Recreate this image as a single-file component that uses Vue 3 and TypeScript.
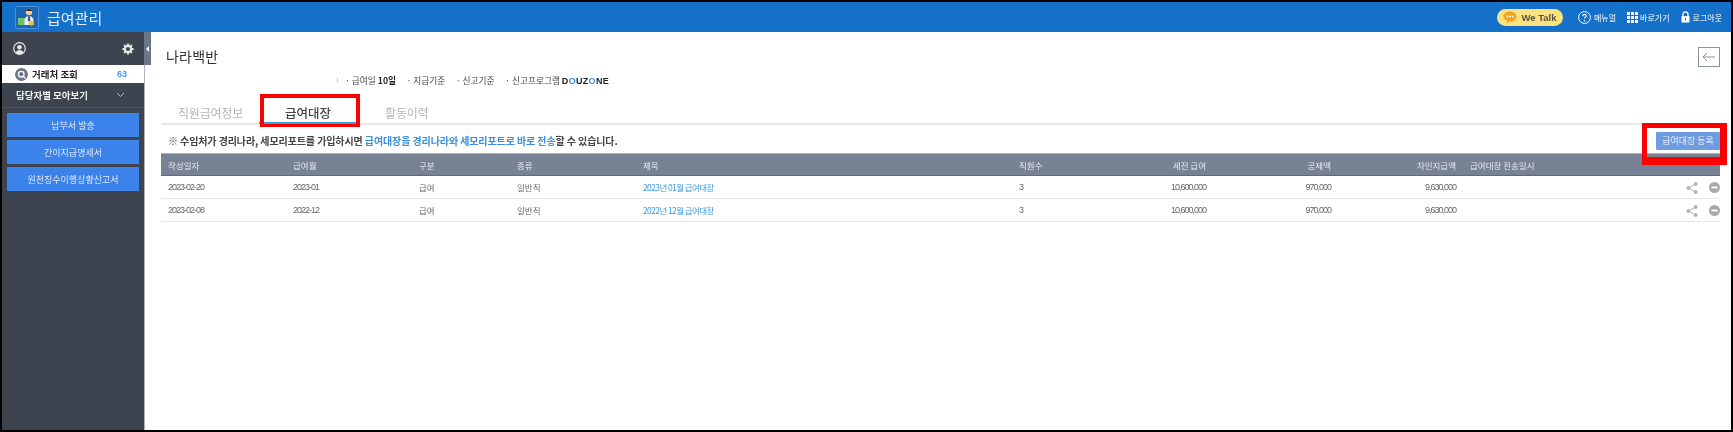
<script setup lang="ts">
interface Row {
  date: string
  month: string
  kind: string
  type: string
  title: string
  staff: string
  gross: string
  deduct: string
  net: string
}
const rows: Row[] = [
  { date: '2023-02-20', month: '2023-01', kind: '급여', type: '일반직', title: '2023년 01월 급여대장', staff: '3', gross: '10,600,000', deduct: '970,000', net: '9,630,000' },
  { date: '2023-02-08', month: '2022-12', kind: '급여', type: '일반직', title: '2022년 12월 급여대장', staff: '3', gross: '10,600,000', deduct: '970,000', net: '9,630,000' },
]
const sideButtons: string[] = ['납부서 발송', '간이지급명세서', '원천징수이행상황신고서']
const dots: number[] = [0, 1, 2, 3, 4, 5, 6, 7, 8]
</script>

<template>
  <div class="frame">
    <header class="topbar">
      <div class="logo">
        <svg width="22" height="20" viewBox="0 0 22 20">
          <rect x="2" y="11" width="12" height="7" fill="#6fc26b" />
          <circle cx="13" cy="5" r="3.2" fill="#f2d0a8" />
          <path d="M9.500 3.500q3.500-3.500 7 0l-1 .5h-5z" fill="#3a2c20" />
          <path d="M8.500 18v-5q1-4 4.500-4t4.500 4v5z" fill="#e8eef5" />
          <path d="M12.200 9h1.600l.4 5h-2.400z" fill="#33518a" />
          <circle cx="15" cy="16" r="2.500" fill="#f3c33c" />
        </svg>
      </div>
      <div class="app-title">급여관리</div>
      <div class="top-actions">
        <div class="we-talk">
          <svg width="14" height="13" viewBox="0 0 14 13">
            <path d="M7 .5c3.600 0 6.500 2.200 6.500 5S10.600 10.500 7 10.500l-.8 0L3.500 12.500l.5-2.700C1.900 9 .5 7.400.5 5.500c0-2.800 2.900-5 6.500-5z" fill="#f2a41f" />
            <circle cx="4.300" cy="5.500" r=".9" fill="#fff" />
            <circle cx="7" cy="5.500" r=".9" fill="#fff" />
            <circle cx="9.700" cy="5.500" r=".9" fill="#fff" />
          </svg>
          <span>We Talk</span>
        </div>
        <div class="top-link manual">
          <svg width="13" height="13" viewBox="0 0 13 13">
            <circle cx="6.500" cy="6.500" r="5.900" fill="none" stroke="#fff" stroke-width="1" />
            <path d="M4.700 5.100q.2-1.700 1.800-1.700t1.800 1.500q0 .9-1 1.400-.8.400-.8 1.300" fill="none" stroke="#fff" stroke-width="1.100" />
            <circle cx="6.500" cy="9.700" r=".7" fill="#fff" />
          </svg>
          <span>매뉴얼</span>
        </div>
        <div class="top-link shortcut">
          <div class="grid-icon"><i v-for="d in dots" :key="d"></i></div>
          <span>바로가기</span>
        </div>
        <div class="top-link logout">
          <svg width="9" height="12" viewBox="0 0 9 12">
            <path d="M2 5V3.300a2.500 2.500 0 0 1 5 0V5" fill="none" stroke="#fff" stroke-width="1.300" />
            <rect x=".5" y="5" width="8" height="6.500" rx=".6" fill="#fff" />
            <rect x="4" y="7" width="1" height="2.500" fill="#1470c8" />
          </svg>
          <span>로그아웃</span>
        </div>
      </div>
    </header>

    <div class="body">
      <aside class="sidebar">
        <div class="side-main">
          <div class="user-row">
            <svg width="13" height="13" viewBox="0 0 13 13">
              <circle cx="6.500" cy="6.500" r="5.800" fill="none" stroke="#e8e8e8" stroke-width="1.200" />
              <circle cx="6.500" cy="5.200" r="2.300" fill="#e8e8e8" />
              <path d="M2.500 11q1-3 4-3t4 3l-1.500 1h-5z" fill="#e8e8e8" />
            </svg>
            <svg width="12" height="12" viewBox="0 0 12 12">
              <circle cx="6" cy="6" r="3.200" fill="none" stroke="#e8e8e8" stroke-width="2.200" />
              <path d="M6 .5v2M6 9.500v2M.5 6h2M9.500 6h2M2.100 2.100l1.400 1.400M8.500 8.500l1.400 1.400M2.100 9.900l1.400-1.400M8.500 3.500l1.400-1.400" stroke="#e8e8e8" stroke-width="1.800" />
            </svg>
          </div>
          <div class="client-row">
            <svg class="search-ico" width="13" height="13" viewBox="0 0 13 13">
              <circle cx="6.500" cy="6.500" r="6.500" fill="#6b7689" />
              <circle cx="6.200" cy="6.200" r="2.800" fill="none" stroke="#fff" stroke-width="1.300" />
              <path d="M8.300 8.300l2 2" stroke="#fff" stroke-width="1.300" />
            </svg>
            <span class="client-label">거래처 조회</span>
            <span class="client-count">63</span>
          </div>
          <div class="group-row">
            <span>담당자별 모아보기</span>
            <svg width="9" height="6" viewBox="0 0 9 6">
              <path d="M1 1l3.500 3.500L8 1" fill="none" stroke="#aeb4bd" stroke-width="1" />
            </svg>
          </div>
          <div class="side-buttons">
            <div v-for="b in sideButtons" :key="b" class="side-btn">{{ b }}</div>
          </div>
        </div>
        <div class="rail">
          <div class="rail-toggle"><i></i></div>
        </div>
      </aside>

      <main class="content">
        <div class="title-row">
          <h1>나라백반</h1>
          <div class="back-btn">
            <svg width="14" height="10" viewBox="0 0 14 10">
              <path d="M13 5H1M5 1L1 5l4 4" fill="none" stroke="#8a919c" stroke-width="1" />
            </svg>
          </div>
        </div>
        <div class="info-row">
          <span class="info-tick"></span>
          <span class="info-item">· 급여일 <b>10일</b></span>
          <span class="info-item">· 지급기준</span>
          <span class="info-item">· 신고기준</span>
          <span class="info-item">· 신고프로그램 <b class="douzone">D<em>O</em>UZ<em>O</em>NE</b></span>
        </div>
        <nav class="tabs">
          <div class="tab tab-first">직원급여정보</div>
          <div class="tab tab-active">급여대장<span class="red-box tab-mark"></span></div>
          <div class="tab tab-last">활동이력</div>
        </nav>
        <div class="notice-row">
          <p class="notice">※ 수임처가 경리나라, 세모리포트를 가입하시면 <span>급여대장을 경리나라와 세모리포트로 바로 전송</span>할 수 있습니다.</p>
          <div class="register">급여대장 등록<span class="red-box reg-mark"></span></div>
        </div>
        <table class="ledger">
          <colgroup>
            <col class="c1" /><col class="c2" /><col class="c3" /><col class="c4" /><col class="c5" />
            <col class="c6" /><col class="c7" /><col class="c8" /><col class="c9" /><col class="c10" /><col class="c11" />
          </colgroup>
          <thead>
            <tr>
              <th>작성일자</th><th>급여월</th><th>구분</th><th>종류</th><th>제목</th><th>직원수</th>
              <th class="num">세전 급여</th><th class="num">공제액</th><th class="num">차인지급액</th>
              <th class="sent">급여대장 전송일시</th><th></th>
            </tr>
          </thead>
          <tbody>
            <tr v-for="r in rows" :key="r.date">
              <td class="digits">{{ r.date }}</td><td class="digits">{{ r.month }}</td><td>{{ r.kind }}</td><td>{{ r.type }}</td>
              <td class="link">{{ r.title }}</td><td class="digits">{{ r.staff }}</td>
              <td class="num digits">{{ r.gross }}</td><td class="num digits">{{ r.deduct }}</td><td class="num digits">{{ r.net }}</td>
              <td></td>
              <td class="actions">
                <svg width="12" height="12" viewBox="0 0 12 12">
                  <path d="M9.500 2L2.500 6l7 4" fill="none" stroke="#b4b4b4" stroke-width="1" />
                  <circle cx="9.700" cy="2" r="1.900" fill="#b4b4b4" />
                  <circle cx="2.300" cy="6" r="1.900" fill="#b4b4b4" />
                  <circle cx="9.700" cy="10" r="1.900" fill="#b4b4b4" />
                </svg>
                <svg width="11" height="11" viewBox="0 0 11 11">
                  <circle cx="5.500" cy="5.500" r="5.500" fill="#a9a9a9" />
                  <rect x="2.500" y="4.600" width="6" height="1.800" fill="#fff" />
                </svg>
              </td>
            </tr>
          </tbody>
        </table>
      </main>
    </div>
  </div>
</template>

<style>
html, body { margin: 0; background: #000; }
</style>

<style scoped>
.frame {
  box-sizing: border-box;
  width: 1733px;
  height: 432px;
  border: 2px solid #000;
  display: flex;
  flex-direction: column;
  overflow: hidden;
  background: #fff;
  font-family: "Noto Sans CJK KR", "Liberation Sans", sans-serif;
  filter: blur(0.55px);
}
.topbar {
  height: 30px;
  flex: none;
  background: #1470c8;
  display: flex;
  align-items: center;
  color: #fff;
  padding-left: 13px;
}
.logo {
  box-sizing: border-box;
  width: 24px;
  height: 23px;
  border: 1px solid #4a93da;
  border-radius: 2px;
  background: #1a66b5;
  display: flex;
  align-items: center;
  justify-content: center;
}
.app-title { margin-left: 8px; font-size: 15px; color: #e4eefa; }
.top-actions { margin-left: auto; display: flex; align-items: center; padding-right: 9px; }
.we-talk {
  width: 66px;
  height: 17px;
  border-radius: 9px;
  background: #fbe27e;
  display: flex;
  align-items: center;
  justify-content: center;
  gap: 4px;
  font: bold 9.500px "Liberation Sans", sans-serif;
  color: #5a5040;
}
.top-link { display: flex; align-items: center; gap: 3px; font-size: 8px; color: #fff; }
.manual { margin-left: 15px; }
.shortcut { margin-left: 11px; gap: 2px; }
.logout { margin-left: 11px; }
.grid-icon { display: grid; grid-template-columns: repeat(3, 3px); gap: 1px; }
.grid-icon i { width: 3px; height: 3px; background: #fff; }

.body { flex: 1; display: flex; min-height: 0; }
.sidebar { width: 149px; flex: none; display: flex; background: #3d4450; }
.side-main { width: 142px; flex: none; display: flex; flex-direction: column; }
.rail {
  box-sizing: border-box;
  width: 7px;
  border-left: 1px solid #aeb4bd;
  background: #fff;
}
.rail-toggle { height: 33px; margin-left: -1px; background: #6b7689; display: flex; align-items: center; justify-content: center; }
.rail-toggle i { width: 0; height: 0; border: 3px solid transparent; border-right-color: #fff; border-left-width: 0; }
.user-row {
  height: 33px;
  display: flex;
  align-items: center;
  justify-content: space-between;
  padding: 0 10px 0 11px;
}
.client-row {
  height: 18px;
  background: #fff;
  display: flex;
  align-items: center;
  padding-left: 13px;
  font-size: 9.500px;
  font-weight: 700;
  color: #222;
}
.search-ico { flex: none; }
.client-label { margin-left: 4px; width: 85px; }
.client-count { color: #4a9be8; font: bold 9px "Liberation Sans", sans-serif; }
.group-row {
  height: 25px;
  box-sizing: border-box;
  border-bottom: 1px solid #4a515d;
  display: flex;
  align-items: center;
  justify-content: space-between;
  padding: 0 19px 0 14px;
  font-size: 9.500px;
  font-weight: 700;
  color: #f0f0f0;
}
.side-buttons { display: flex; flex-direction: column; gap: 3px; padding: 5px 5px 0; }
.side-btn {
  height: 24px;
  background: #3b82ea;
  color: #dfe9f8;
  font-size: 9px;
  display: flex;
  align-items: center;
  justify-content: center;
}

.content { flex: 1; min-width: 0; padding: 0 11px 0 10px; }
.title-row {
  height: 34px;
  display: flex;
  align-items: flex-end;
  justify-content: space-between;
  padding-left: 5px;
}
h1 { margin: 0; font-size: 14px; font-weight: 400; color: #333; line-height: 20px; letter-spacing: .2px; }
.back-btn {
  box-sizing: border-box;
  width: 22px;
  height: 20px;
  margin-bottom: -1px;
  border: 1px solid #8a919c;
  display: flex;
  align-items: center;
  justify-content: center;
}
.info-row {
  height: 20px;
  margin-top: 4px;
  display: flex;
  align-items: center;
  padding-left: 176px;
  font-size: 8.700px;
  color: #444;
}
.info-tick { width: 1px; height: 5px; background: #ccc; margin-right: 7px; }
.info-item { margin-right: 10.500px; }
.info-item b { color: #222; }
.douzone { font: bold 9px "Liberation Sans", sans-serif; letter-spacing: .3px; margin-left: 0; }
.douzone em { font-style: normal; color: #3a8fd8; }
.tabs {
  height: 35px;
  box-sizing: border-box;
  border-bottom: 2px solid #e8e8e8;
  display: flex;
  align-items: center;
  font-size: 12px;
  line-height: 18px;
  color: #b5b5b5;
  letter-spacing: -.2px;
  padding-top: 12px;
}
.tab { position: relative; }
.tab-first { margin-left: 17px; }
.tab-active { margin-left: 42px; color: #444; font-weight: 500; font-size: 12.500px; letter-spacing: 0; }
.tab-active::after {
  content: "";
  position: absolute;
  left: -26px;
  right: -26px;
  bottom: -2px;
  height: 2px;
  background: #3a9be0;
}
.tab-last { margin-left: 54px; }
.red-box { position: absolute; box-sizing: border-box; border: 4px solid #f00; z-index: 1; }
.tab-mark { left: -25px; top: -10px; width: 100px; height: 33px; border-bottom-width: 3px; }
.notice-row {
  position: relative;
  height: 28px;
  display: flex;
  align-items: center;
  justify-content: space-between;
  padding: 3px 0 0 7px;
  box-sizing: border-box;
}
.notice { margin: 0; font-size: 10px; font-weight: 700; color: #444; letter-spacing: -.1px; }
.notice span { color: #3a8fd8; }
.register {
  position: relative;
  width: 64px;
  height: 18px;
  border-radius: 1px;
  background: #6f9be0;
  color: #e6eefb;
  font-size: 9px;
  display: flex;
  align-items: center;
  justify-content: center;
}
.reg-mark { left: -14px; top: -9px; width: 85px; height: 42px; border-width: 5px 7px 8px 5px; }
.ledger {
  width: 100%;
  border-collapse: collapse;
  table-layout: fixed;
  font-size: 8.500px;
  color: #666;
}
.c1 { width: 125px; } .c2 { width: 126px; } .c3 { width: 98px; } .c4 { width: 126px; } .c5 { width: 376px; }
.c6 { width: 100px; } .c7 { width: 94px; } .c8 { width: 125px; } .c9 { width: 125px; } .c10 { width: 150px; } .c11 { width: 114px; }
th {
  height: 22px;
  box-sizing: border-box;
  padding: 0 0 0 7px;
  background: #778294;
  border-top: 1px solid #aeb4bd;
  border-bottom: 1px solid #5f6a7c;
  color: #e8ebef;
  font-weight: 400;
  text-align: left;
}
td {
  height: 23px;
  box-sizing: border-box;
  padding: 0 0 0 7px;
  border-bottom: 1px solid #e8e8e8;
}
td.digits { font: 9px "Liberation Sans", sans-serif; letter-spacing: -1px; }
th.num, td.num { text-align: right; padding: 0; }
th.sent { padding-left: 14px; white-space: nowrap; }
td.link { color: #3d9be0; letter-spacing: -.6px; }
.actions { text-align: right; padding: 0; }
.actions svg { vertical-align: middle; }
.actions svg + svg { margin-left: 11px; }
</style>
